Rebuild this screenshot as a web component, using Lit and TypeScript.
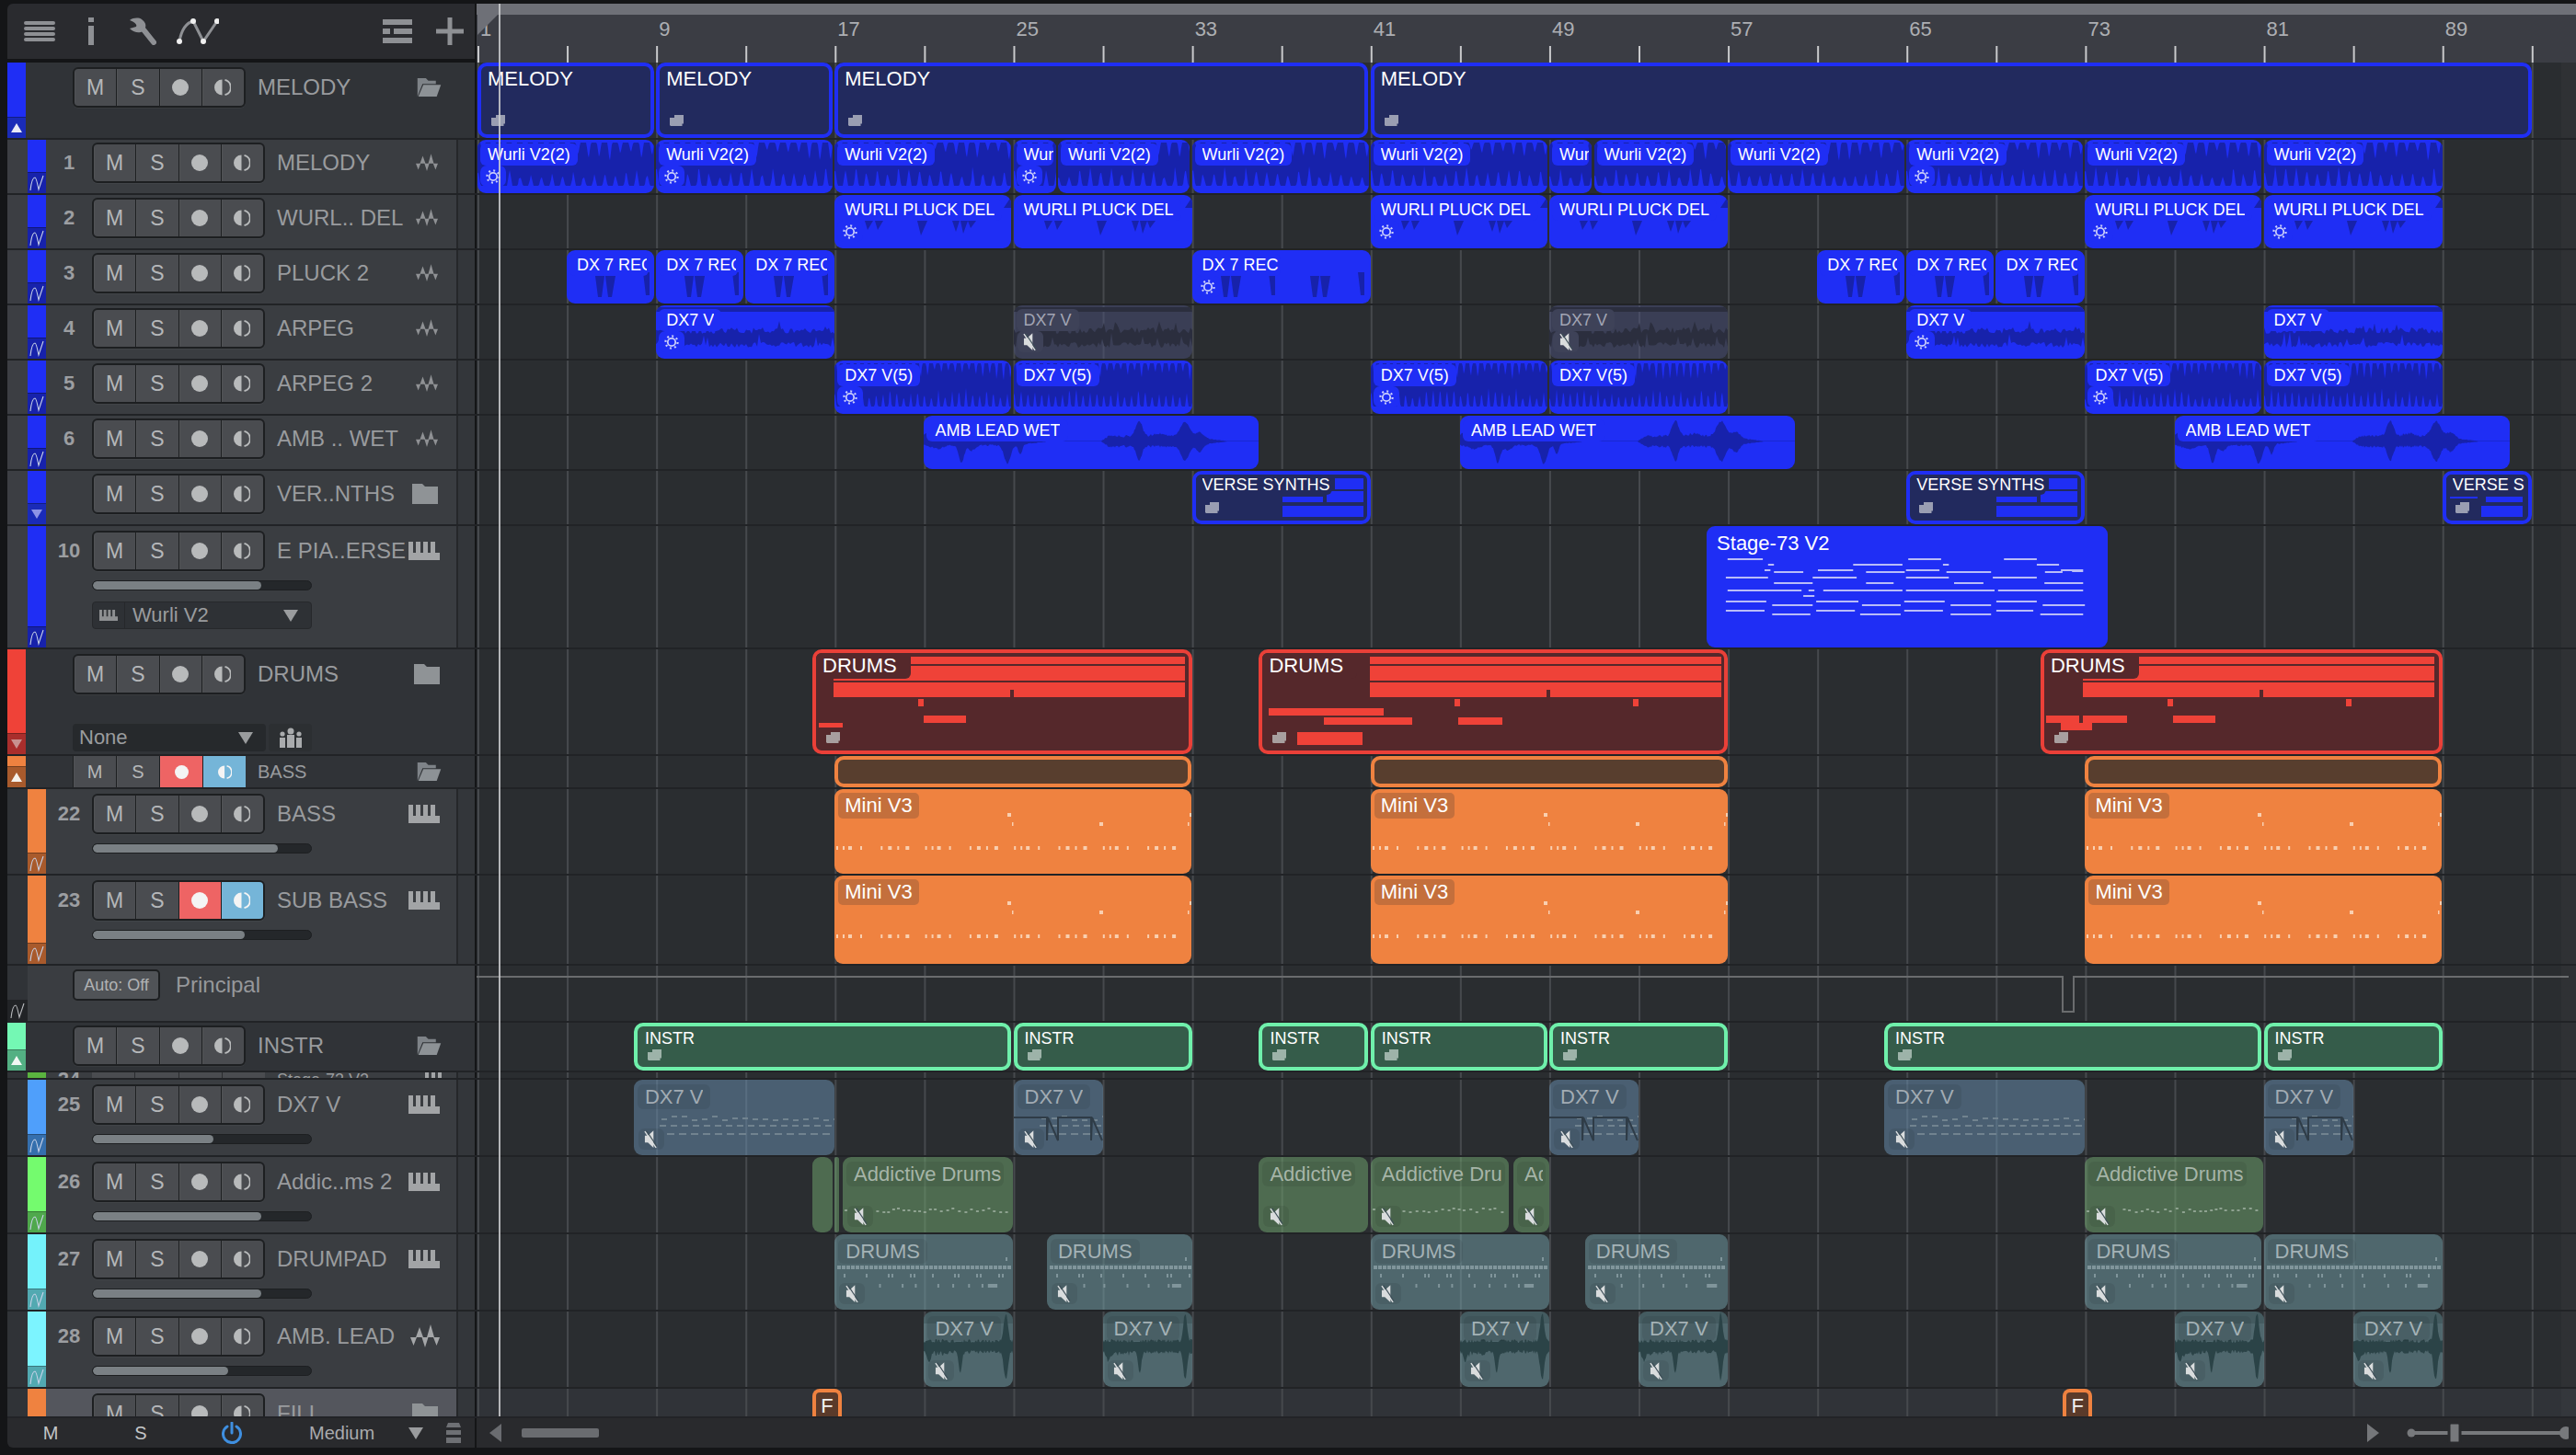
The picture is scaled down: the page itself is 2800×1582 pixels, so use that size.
import { LitElement, html, css, svg, nothing } from 'lit';
import { customElement } from 'lit/decorators.js';

const BAR = 24.27;
const px = (b: number) => (b - 1) * BAR + 1;
const barsEight = [1, 9, 17, 25, 33, 41, 49, 57, 65, 73, 81, 89];

function rng(seed: number) {
  let a = seed * 7919 + 13;
  return () => {
    a |= 0; a = (a + 0x6d2b79f5) | 0;
    let t = Math.imul(a ^ (a >>> 15), 1 | a);
    t = (t + Math.imul(t ^ (t >>> 7), 61 | t)) ^ t;
    return ((t ^ (t >>> 14)) >>> 0) / 4294967296;
  };
}
const envPath = (top: number[], bot: number[], step: number) => {
  let d = `M0 ${top[0].toFixed(1)}`;
  top.forEach((y, i) => (d += `L${(i * step).toFixed(1)} ${y.toFixed(1)}`));
  for (let i = bot.length - 1; i >= 0; i--) d += `L${(i * step).toFixed(1)} ${bot[i].toFixed(1)}`;
  return d + 'Z';
};
const rects = (r: number[][]) => r.map(([x, y, w, h]) => `M${x.toFixed(1)} ${y}h${w.toFixed(1)}v${h}h${(-w).toFixed(1)}z`).join('');

function spikes(w: number, h: number, seed: number, period: number) {
  const r = rng(seed);
  const n = Math.ceil(w / period);
  const tops: number[] = [], bots: number[] = [];
  for (let i = 0; i <= n; i++) { tops.push(8 + r() * 14); bots.push(10 + r() * 12); }
  const t: number[] = [], b: number[] = [];
  for (let x = 0; x <= w; x += 1) {
    const i = Math.floor(x / period), f = x / period - i;
    const tri = Math.max(0, 1 - Math.abs(f - 0.5) * 4.5);
    const tri2 = Math.max(0, 1 - Math.abs(((f + 0.45) % 1) - 0.5) * 4);
    t.push(3 + tops[i] * tri);
    b.push(h - 8 - bots[i] * tri2);
  }
  return envPath(t, b, 1);
}
function tris(list: number[][]) {
  return list.map(([x, y, a, b, c]) => `M${x} ${y}L${x + a} ${y}L${x + b} ${y + c}Z`).join('');
}
function pluck(w: number) {
  let d = '';
  for (let o = 0; o < w; o += 194) {
    d += tris([[o + 33, 28, 9, 3, 10], [o + 44, 28, 9, 3, 10], [o + 90, 28, 11, 4, 16], [o + 128, 28, 8, 4, 12], [o + 137, 28, 8, 3, 14], [o + 145, 28, 9, 3, 8]]);
  }
  return d + `M${w} 14L${w - 8} 14L${w} 2Z`;
}
function rec(w: number) {
  let d = '';
  for (let o = 0; o < w; o += 97) {
    d += `M${o + 31} 28h10l-3 23h-4zM${o + 42} 28h11l-4 23h-4zM${o + 83} 24h7v25h-4z`;
  }
  return d;
}
function dx7(w: number, h: number, seed: number) {
  const r = rng(seed);
  const t: number[] = [], b: number[] = [];
  for (let x = 0; x <= w; x += 2) {
    const sp = r() > 0.9 ? 10 * r() : 0;
    t.push(24 + r() * 7 - sp);
    b.push(h - 12 - r() * 6 - (r() > 0.88 ? 14 * r() : 0));
  }
  return envPath(t, b, 2) + `M0 2h${w}v5H0z`;
}
const gs = (x: number, c0: number, s: number) => Math.exp(-Math.pow((x - c0) / s, 2));
function amb(w: number, seed: number) {
  const r = rng(seed);
  const t: number[] = [], b: number[] = [];
  const mid = 27.5;
  for (let x = 0; x <= w; x += 1) {
    let up = 0, dn = 0;
    if (x <= 132) {
      const base = (3 + r() * 2) * Math.min(1, (135 - x) / 40);
      dn = base + gs(x, 41, 4) * 19 + gs(x, 52, 5) * 6 + gs(x, 91, 5) * 20 + gs(x, 105, 3) * 11 + gs(x, 15, 8) * 4;
      up = base * 0.6 + gs(x, 3, 6) * 6;
    } else if (x >= 193 && x <= 330) {
      const ramp = Math.min(1, (x - 193) / 8) * Math.min(1, (330 - x) / 45);
      const base = (4 + r() * 2.5) * ramp;
      up = base + gs(x, 234, 5) * 17 + gs(x, 284, 7) * 16 + gs(x, 300, 6) * 6 + gs(x, 255, 8) * 3;
      dn = base + gs(x, 234, 4) * 16 + gs(x, 284, 6) * 16 + gs(x, 300, 5) * 8;
    }
    t.push(mid - up);
    b.push(mid + dn + 0.6);
  }
  return envPath(t, b, 1);
}
function waveTeal(w: number, h: number, seed: number) {
  const r = rng(seed);
  const t: number[] = [], b: number[] = [];
  const mid = 38;
  for (let x = 0; x <= w; x += 1) {
    const f = x / w;
    let a = 4 + r() * 4;
    if (f > 0.36 && f < 0.42) a = 5;
    const s = gs(f, 0.41, 0.025) * 24 + gs(f, 0.06, 0.03) * 10;
    const e = gs(f, 0.92, 0.03);
    t.push(mid - a - e * 30);
    b.push(mid + a + s + e * 30 + (f > 0.1 && f < 0.3 ? r() * 3 : 0));
  }
  return envPath(t, b, 1);
}
const STAGE: number[][] = [[122,182,253],[191,201,270],[336,420,270],[430,486,253],[489,499,270],[593,649,253],[649,687,270],[185,195,287],[201,251,293],[276,336,287],[358,424,293],[426,483,287],[495,571,293],[663,693,293],[690,728,287],[709,728,290],[119,191,311],[267,342,311],[426,499,311],[574,649,311],[201,267,328],[358,405,328],[508,558,328],[662,728,328],[122,248,351],[260,270,351],[285,420,351],[426,577,351],[583,728,351],[251,270,369],[119,188,385],[273,345,385],[423,492,385],[580,649,385],[198,267,398],[351,417,398],[502,571,398],[659,731,398],[119,185,415],[273,339,415],[423,489,415],[580,643,415],[198,263,427],[348,417,427],[502,571,427],[655,728,427]];
const stageD = () => rects(STAGE.map(([a, b, y]) => [a / 1.568 - 55, Math.round(y / 2.9 - 52), (b - a) / 1.568, 2]));
function miniD(o: number) {
  const r: number[][] = [[188, 26 + o, 4, 4], [386, 26 + o, 2, 4], [193, 36 + o, 1.5, 4], [288, 36 + o, 4, 4], [384, 36 + o, 1.5, 4]];
  for (let g = 0; g < 8; g++) {
    const off = g * 48.3 + 2;
    const p = g % 2 ? [[0, 2], [8, 4], [18, 2], [27, 4]] : [[0, 2], [7, 2], [13, 4], [26, 2]];
    p.forEach(([x, w]) => r.push([off + x, 62 + o, w, 4]));
  }
  return rects(r);
}
function drumsD(off: number, v: number) {
  const W = 382;
  const r: number[][] = [[off, 8, W, 8], [off, 18, W, 16], [off, 36, W, 16]];
  const low = v === 0
    ? [[92, 54, 6, 8], [98, 72, 46, 8], [-16, 80, 26, 5]]
    : v === 1
    ? [[92, 54, 6, 8], [286, 54, 6, 8], [-110, 64, 125, 8], [-50, 74, 96, 8], [96, 74, 48, 8], [-79, 90, 71, 14]]
    : [[92, 54, 6, 8], [286, 54, 6, 8], [-40, 72, 36, 8], [0, 72, 48, 8], [98, 72, 46, 8], [-24, 80, 34, 8]];
  low.forEach(([x, y, w, h]) => r.push([off + x, y, w, h]));
  return { base: rects(r), notch: rects([[off + 192, 44, 4, 8]]) };
}
function dashD(w: number, kind: string, seed: number) {
  const r = rng(seed);
  const out: number[][] = [];
  if (kind === 'dx25') {
    for (let x = 30; x < w; x += 11) out.push([x, r() > 0.75 ? 39 : 41 + Math.floor(r() * 3), 6, 2]);
    for (let x = 28; x < w; x += 12) out.push([x, 49, 7, 2]);
    for (let x = 36; x < w - 2; x += 13) out.push([x, 58, 8, 2]);
  } else if (kind === 'add') {
    for (let x = 2; x < w - 2; x += 5 + r() * 3) { if (x > 34 || x < 4) out.push([x, 55 + Math.floor(r() * 5), 3, 2]); }
  } else if (kind === 'drm') {
    for (let x = 3; x < w - 3; x += 5) out.push([x, 34, 4, 4]);
    for (let x = 10; x < w - 3; x += 24) { out.push([x, 43, 2, 4]); if (r() > 0.6) out.push([x + 4, 43, 2, 4]); }
    for (let x = w * 0.25; x < w - 15; x += 14 + r() * 12) out.push([x, 54, 2, 4]);
    out.push([w * 0.86, 54, 10, 4]); out.push([w - 8, 25, 2, 4]);
  }
  return rects(out);
}

interface C { s: number; e: number; l?: string; k: string; gear?: boolean; seed?: number; v?: number; }
const c = (s: number, e: number, k: string, l?: string, extra: Partial<C> = {}): C => ({ s, e, k, l, ...extra });
const mk = (list: number[][], k: string, l: string, gears: number[] = []) =>
  list.map(([s, e], i) => c(s, e, k, l, { gear: gears.includes(s), seed: s + i }));

const BLUE = '#1f2ef5', BT = '#1722ab';
interface R {
  t: 'track' | 'folder' | 'small' | 'auto' | 'sliver';
  h: number; pad?: number; col: string; tab?: string; arrow?: string; arrowUp?: boolean;
  num?: string; name?: string; icon?: string; fader?: number; select?: boolean; none?: boolean;
  col0?: string; clips: C[]; fill?: boolean; on?: boolean;
}
const L1 = '#3c3e43', L2 = '#303337';
const ROWS: R[] = [
  { t: 'folder', h: 84, pad: 5, col: BLUE, tab: '#1a2bb8', arrow: '#e8e9f5', arrowUp: true, name: 'MELODY', icon: 'open', clips: [c(1, 9, 'fb', 'MELODY'), c(9, 17, 'fb', 'MELODY'), c(17, 41, 'fb', 'MELODY'), c(41, 93, 'fb', 'MELODY')] },
  { t: 'track', h: 60, pad: 3, col: BLUE, tab: BT, num: '1', name: 'MELODY', icon: 'wave', col0: L1, clips: mk([[1, 9], [9, 17], [17, 25], [25, 27], [27, 33], [33, 41], [41, 49], [49, 51], [51, 57], [57, 65], [65, 73], [73, 81], [81, 89]], 'wurli', 'Wurli V2(2)', [1, 9, 25, 65]) },
  { t: 'track', h: 60, pad: 3, col: BLUE, tab: BT, num: '2', name: 'WURL.. DEL', icon: 'wave', col0: L1, clips: mk([[17, 25], [25, 33], [41, 49], [49, 57], [73, 81], [81, 89]], 'pluck', 'WURLI PLUCK DEL', [17, 41, 73, 81]) },
  { t: 'track', h: 60, pad: 3, col: BLUE, tab: BT, num: '3', name: 'PLUCK 2', icon: 'wave', col0: L1, clips: [...mk([[5, 9], [9, 13], [13, 17]], 'rec', 'DX 7 REC'), c(33, 41, 'rec', 'DX 7 REC', { gear: true }), ...mk([[61, 65], [65, 69], [69, 73]], 'rec', 'DX 7 REC')] },
  { t: 'track', h: 60, pad: 3, col: BLUE, tab: BT, num: '4', name: 'ARPEG', icon: 'wave', col0: L1, clips: [c(9, 17, 'dx7', 'DX7 V', { gear: true, seed: 3 }), c(25, 33, 'dx7m', 'DX7 V', { seed: 5 }), c(49, 57, 'dx7m', 'DX7 V', { seed: 5 }), c(65, 73, 'dx7', 'DX7 V', { gear: true, seed: 3 }), c(81, 89, 'dx7', 'DX7 V', { seed: 7 })] },
  { t: 'track', h: 60, pad: 3, col: BLUE, tab: BT, num: '5', name: 'ARPEG 2', icon: 'wave', col0: L1, clips: mk([[17, 25], [25, 33], [41, 49], [49, 57], [73, 81], [81, 89]], 'dx5', 'DX7 V(5)', [17, 41, 73]) },
  { t: 'track', h: 60, pad: 3, col: BLUE, tab: BT, num: '6', name: 'AMB .. WET', icon: 'wave', col0: L1, clips: mk([[21, 36], [45, 60], [77, 92]], 'amb', 'AMB LEAD WET') },
  { t: 'track', h: 60, pad: 3, col: BLUE, tab: '#1a2bb8', arrow: '#8d93e6', name: 'VER..NTHS', icon: 'closed', col0: L1, clips: [c(33, 41, 'verse', 'VERSE SYNTHS'), c(65, 73, 'verse', 'VERSE SYNTHS'), c(89, 93, 'verse2', 'VERSE SYNTHS')] },
  { t: 'track', h: 134, pad: 5, col: BLUE, tab: BT, num: '10', name: 'E PIA..ERSE', icon: 'keys', fader: 183, select: true, col0: L1, clips: [c(56.05, 74, 'stage', 'Stage-73 V2')] },
  { t: 'folder', h: 116, pad: 5, col: '#ef4238', tab: '#a92e2c', arrow: '#c8918f', name: 'DRUMS', icon: 'closed', none: true, clips: [c(16, 33, 'fr', 'DRUMS', { v: 0 }), c(36, 57, 'fr', 'DRUMS', { v: 1 }), c(71, 89, 'fr', 'DRUMS', { v: 2 })] },
  { t: 'small', h: 36, col: '#ef8240', tab: '#a85a2c', arrow: '#f5f0ea', arrowUp: true, name: 'BASS', icon: 'open', clips: [c(17, 33, 'fo'), c(41, 57, 'fo'), c(73, 89, 'fo')] },
  { t: 'track', h: 94, pad: 5, col: '#ef8240', tab: '#a85a2c', num: '22', name: 'BASS', icon: 'keys', fader: 201, col0: L2, clips: mk([[17, 33], [41, 57], [73, 89]], 'mini', 'Mini V3') },
  { t: 'track', h: 98, pad: 5, col: '#ef8240', tab: '#a85a2c', num: '23', name: 'SUB BASS', icon: 'keys', fader: 165, col0: L2, on: true, clips: mk([[17, 33], [41, 57], [73, 89]], 'mini2', 'Mini V3') },
  { t: 'auto', h: 62, col: L2, clips: [] },
  { t: 'folder', h: 54, pad: 3, col: '#74f8b4', tab: '#53b083', arrow: '#f2f8f4', arrowUp: true, name: 'INSTR', icon: 'open', clips: [c(8, 25, 'fg', 'INSTR'), c(25, 33, 'fg', 'INSTR'), c(36, 41, 'fg', 'INSTR'), c(41, 49, 'fg', 'INSTR'), c(49, 57, 'fg', 'INSTR'), c(64, 81, 'fg', 'INSTR'), c(81, 89, 'fg', 'INSTR')] },
  { t: 'sliver', h: 8, col: '#5ab33f', col0: L2, num: '24', name: 'Stage-73 V2', icon: 'keys', clips: [] },
  { t: 'track', h: 84, pad: 5, col: '#4f9ffb', tab: '#356fad', num: '25', name: 'DX7 V', icon: 'keys', fader: 131, col0: L2, clips: [c(8, 17, 'm25', 'DX7 V', { seed: 1 }), c(25, 29, 'm25b', 'DX7 V', { seed: 2 }), c(49, 53, 'm25b', 'DX7 V', { seed: 2 }), c(64, 73, 'm25', 'DX7 V', { seed: 1 }), c(81, 85, 'm25b', 'DX7 V', { seed: 2 })] },
  { t: 'track', h: 84, pad: 5, col: '#74fb6e', tab: '#4fa84c', num: '26', name: 'Addic..ms 2', icon: 'keys', fader: 183, col0: L2, clips: [c(16, 17, 'm26'), c(17, 17.31, 'm26'), c(17.36, 25, 'm26t', 'Addictive Drums', { seed: 1 }), c(36, 41, 'm26', 'Addictive'), c(41, 47.3, 'm26t', 'Addictive Drums', { seed: 2 }), c(47.4, 49, 'm26', 'Addictive Drums'), c(73, 81, 'm26t', 'Addictive Drums', { seed: 3 })] },
  { t: 'track', h: 84, pad: 5, col: '#74f2fb', tab: '#52a9b1', num: '27', name: 'DRUMPAD', icon: 'keys', fader: 183, col0: L2, clips: [c(17, 25, 'm27', 'DRUMS', { seed: 1 }), c(26.5, 33, 'm27', 'DRUMS', { seed: 2 }), c(41, 49, 'm27', 'DRUMS', { seed: 1 }), c(50.6, 57, 'm27', 'DRUMS', { seed: 2 }), c(73, 81, 'm27', 'DRUMS', { seed: 1 }), c(81, 89, 'm27', 'DRUMS', { seed: 3 })] },
  { t: 'track', h: 84, pad: 5, col: '#7cf4ff', tab: '#52a9b1', num: '28', name: 'AMB. LEAD', icon: 'wave2', fader: 147, col0: L2, clips: mk([[21, 25], [29, 33], [45, 49], [53, 57], [77, 81], [85, 89]], 'm28', 'DX7 V') },
  { t: 'track', h: 84, pad: 5, col: '#ef8240', tab: '#a85a2c', name: 'FILL', icon: 'closed', col0: L2, fill: true, clips: [c(16, 17.3, 'mark', 'F'), c(72, 73.3, 'mark', 'F')] },
];

const WAVE = 'M0 14L3.500 23L7 14ZM6 14L10 3L14 14ZM12.500 14L16 25L19.500 14ZM18 14L22 0L26 14ZM25 14L28.500 23L32 14Z';
const ic = {
  wave: html`<svg class="ic-wave" viewBox="0 0 32 26"><path d="${WAVE}" fill="#8f9194"/></svg>`,
  wave2: html`<svg class="ic-wave2" viewBox="0 0 32 26"><path d="${WAVE}" fill="#a4a6a8"/></svg>`,
  keys: html`<svg class="ic-keys" viewBox="0 0 34 20"><path d="M0 0h5v12h3V0h5v12h3V0h5v12h3V0h5v12h5V0v20H0z" fill="#a2a4a6"/></svg>`,
  closed: html`<svg class="ic-folder" viewBox="0 0 28 22"><path d="M0 0h11l3 3h14v19H0z" fill="#8f9396"/></svg>`,
  open: html`<svg class="ic-open" viewBox="0 0 28 22"><path d="M0 0h10l3 3h9v4H6L0 22z" fill="#7e8388"/><path d="M7 8h21l-5 14H1z" fill="#8d9296"/></svg>`,
  mini: html`<svg class="ic-mini" viewBox="0 0 15 12"><path d="M5 0h10v9.500h-1.500V12H1.500C.7 12 0 11.300 0 10.500V3h5z" fill="currentColor"/></svg>`,
  gear: html`<svg class="ic-gear" viewBox="0 0 16 16"><circle cx="8" cy="8" r="4.200" fill="none" stroke="#c9cdfb" stroke-width="1.800"/><circle cx="8" cy="8" r="6.600" fill="none" stroke="#c9cdfb" stroke-width="2.200" stroke-dasharray="2 3.180"/></svg>`,
  mute: html`<svg class="ic-mute" viewBox="0 0 16 22"><path d="M1 7h3.500L11 1v20l-6.500-6H1z" fill="#d9dcdd"/><path d="M1 2l13 19" stroke="#d9dcdd" stroke-width="1.600"/><path d="M3 1.500l12 18" stroke="#3e4f58" stroke-width="1.200"/></svg>`,
  tri: html`<svg class="ic-tri" viewBox="0 0 16 13"><path d="M0 0h16L8 13z" fill="#9a9c9e"/></svg>`,
  auto: (col: string) => html`<svg class="ic-auto" viewBox="0 0 16 18"><path d="M1 17C2 8 4 3 6 3c1 0 2 3 4 13L15 1" fill="none" stroke="${col}" stroke-width="1.100"/></svg>`,
  mon: (col: string, arc: string) => html`<svg class="ic-mon" viewBox="0 0 18 20"><path d="M8.500 1.500a8.500 8.500 0 0 0 0 17z" fill="${col}"/><path d="M11.500 1.800a8.500 8.500 0 0 1 0 16.400" fill="none" stroke="${arc}" stroke-width="1.800"/></svg>`,
};

@customElement('app-root')
export class AppRoot extends LitElement {
  static styles = css`
    :host { display: block; width: 2800px; height: 1582px; background: #141517; overflow: hidden;
      font-family: "Liberation Sans", Arial, sans-serif; }
    .win { margin: 4px 0 0 8px; width: 2792px; height: 1570px; display: flex; flex-direction: column; position: relative;
      border-radius: 6px 0 0 6px; overflow: hidden; }
    .top { display: flex; height: 64px; flex: none; }
    .tools { width: 510px; height: 60px; flex: none; background: #2a2b2f; display: flex; align-items: center; border-right: 2px solid #141517; box-sizing: border-box; }
    .tools svg { flex: none; display: block; }
    .sp { flex: 1; }
    .ruler { flex: 1; background: #3b3d44; display: flex; flex-direction: column; position: relative; }
    .rtop { height: 12px; background: #6e7077; margin-right: 15px; flex: none; }
    .rlabels { height: 34px; display: flex; padding-left: 1px; color: #adafb3; font-size: 22px; flex: none; }
    .rlabels div { width: 194.160px; flex: none; padding-left: 3px; box-sizing: border-box; line-height: 32px; }
    .rticks { height: 18px; flex: none; background: linear-gradient(90deg, #c9cacc 2px, transparent 2px) 1px 0 / 97.080px 100% repeat-x; }
    .rmark { position: absolute; left: 1px; top: 12px; width: 22px; height: 22px; background: #6e7077; clip-path: polygon(0 100%, 100% 0, 0 0); }
    .rrest { position: absolute; right: 0; top: 0; bottom: 0; width: 15px; background: #34363b; }
    .rows { flex: 1; min-height: 0; overflow: hidden; display: flex; flex-direction: column; }
    .row { display: flex; flex: none; overflow: hidden; border-bottom: 2px solid #212326; box-sizing: border-box; }
    .hd { width: 510px; flex: none; display: flex; box-sizing: border-box; border-right: 2px solid #141517; background: #303337; }
    .strip { width: 20px; flex: none; display: flex; flex-direction: column; }
    .strip .c { flex: 1; min-height: 0; }
    .tab { height: 23px; flex: none; display: flex; align-items: center; justify-content: center; border-top: 1px solid rgba(0,0,0,.3); box-sizing: border-box; }
    .arrow { width: 0; height: 0; border-left: 6px solid transparent; border-right: 6px solid transparent; border-top: 10px solid currentColor; }
    .arrow.up { border-top: none; border-bottom: 10px solid currentColor; }
    .col0 { width: 22px; flex: none; }
    .panel { flex: 1; min-width: 0; background: #3a3d41; box-sizing: border-box; display: flex; flex-direction: column; }
    .fp { flex: 1; min-width: 0; display: flex; flex-direction: column; padding-left: 51px; padding-right: 36px; }
    .tp { padding-right: 18px; }
    .tail { width: 18px; flex: none; background: #33363a; border-left: 2px solid #25272a; }
    .line { display: flex; align-items: center; flex: none; }
    .num { width: 50px; flex: none; text-align: center; font-weight: 700; font-size: 22px; color: #9c9ea1; padding-right: 0; }
    .btns { display: flex; flex: none; height: 44px; border: 2px solid #1d1f21; border-radius: 6px; box-sizing: border-box; width: 188px; background: #1d1f21; gap: 1px; overflow: hidden;
      box-shadow: 0 1px 0 rgba(255,255,255,.04); }
    .btns div { flex: 1; background: #4a4c50; display: flex; align-items: center; justify-content: center; color: #b5b7b9; font-size: 23px; box-shadow: inset 1px 0 0 rgba(255,255,255,.04); }
    .btns .rec { background: #ee6464; } .btns .mn { background: #75b5d8; }
    .dot { width: 18px; height: 18px; border-radius: 50%; background: #b8babb; }
    .rec .dot { background: #f4f4f4; }
    .ic-mon { width: 18px; height: 20px; flex: none; }
    .btns.sm { height: 34px; border: none; border-radius: 0; border-left: 1px solid #1d1f21; }
    .btns.sm div { font-size: 20px; }
    .btns.sm .dot { width: 15px; height: 15px; }
    .btns.sm .ic-mon { width: 15px; height: 17px; }
    .name { flex: 1; min-width: 0; margin-left: 13px; font-size: 24px; color: #999b9e; white-space: nowrap; }
    .name.sm { font-size: 20px; }
    .ic-wave { width: 24px; height: 20px; margin-right: 2px; flex: none; }
    .ic-wave2 { width: 32px; height: 26px; flex: none; }
    .ic-keys { width: 34px; height: 20px; flex: none; }
    .ic-folder { width: 28px; height: 22px; flex: none; margin-right: 2px; }
    .ic-open { width: 27px; height: 20px; flex: none; }
    .fader { margin: 10px 0 0 50px; width: 239px; height: 11px; border-radius: 6px; background: #24272a; border: 1.500px solid #1d1f21; box-sizing: border-box; flex: none; overflow: hidden; }
    .fader div { height: 100%; background: #7a8084; border-radius: 5px; }
    .sel { display: flex; align-items: center; margin: 12px 0 0 50px; width: 239px; height: 30px; background: #2e3135; border: 1px solid #26282b; border-radius: 4px; box-sizing: border-box; color: #9a9c9e; font-size: 22px; flex: none; }
    .sel .k { width: 34px; height: 100%; display: flex; align-items: center; justify-content: center; border-right: 1px solid #26282b; flex: none; }
    .sel .k svg { width: 20px; height: 12px; }
    .sel .t { flex: 1; padding-left: 8px; }
    .ic-tri { width: 16px; height: 13px; margin-right: 14px; flex: none; }
    .nrow { display: flex; margin-top: 32px; gap: 3px; flex: none; }
    .none { width: 210px; height: 30px; background: #26292c; border-radius: 4px; display: flex; align-items: center; color: #9a9c9e; font-size: 22px; box-sizing: border-box; padding-left: 7px; }
    .none span { flex: 1; }
    .grp { width: 47px; height: 30px; background: #2c2f32; border-radius: 4px; display: flex; align-items: center; justify-content: center; }
    .grp svg { width: 26px; height: 22px; }
    .autow { flex: 1; display: flex; align-items: flex-start; padding: 4px 0 0 49px; background: #3a3d41; }
    .autobtn { width: 95px; height: 34px; background: #505357; border: 2px solid #1d1f21; border-radius: 5px; box-sizing: border-box; color: #b0b2b4; font-size: 18px; display: flex; align-items: center; justify-content: center; flex: none; }
    .princ { margin-left: 17px; font-size: 24px; color: #96989b; line-height: 34px; }
    .ac0 { width: 22px; flex: none; display: flex; flex-direction: column; justify-content: flex-end; background: #303337; }
    .ac0 div { height: 23px; background: #212326; display: flex; align-items: center; justify-content: center; }
    .ic-auto { width: 16px; height: 18px; }
    .sline { display: flex; align-items: flex-start; height: 6px; overflow: hidden; }
    .sline .num { line-height: 16px; }
    .sline .sb { width: 188px; height: 6px; flex: none; display: flex; gap: 1px; background: #2a2c2f; }
    .sline .sb i { flex: 1; background: #4a4c50; }
    .sline .nm { flex: 1; margin-left: 13px; font-size: 18px; line-height: 16px; color: #999b9e; white-space: nowrap; }
    .sline .ks { width: 20px; height: 6px; background: linear-gradient(90deg, #a2a4a6 4px, transparent 4px) 0 0 / 7px 100%; margin-right: 14px; }
    .lane { flex: 1; min-width: 0; position: relative; background: #2a2d30 linear-gradient(90deg, #46494d 2px, transparent 2px) 1px 0 / 97.080px 100% repeat-x; }
    .lane.fill { background-color: #303338; }
    .lane::after { content: ""; position: absolute; right: 0; top: 0; bottom: 0; width: 16px; background: rgba(255,255,255,.025); }
    .autoline { position: absolute; left: 0; top: 0; }
    .clip { position: absolute; top: 0; bottom: 0; box-sizing: border-box; border-radius: 9px; overflow: hidden; color: #fff; }
    .ink { position: absolute; left: 0; top: 0; display: block; }
    .body { position: relative; height: 100%; box-sizing: border-box; display: flex; flex-direction: column; justify-content: space-between; align-items: flex-start; }
    .chip { display: flex; min-width: 0; max-width: 100%; box-sizing: border-box; white-space: nowrap; }
    .chip span { overflow: hidden; }
    .blue { background: #1f2ef5; padding: 4px 0 7px 3px; font-size: 18px; }
    .blue .chip { background: #1f2ef5; border-radius: 6px; padding: 0 8px 0 8px; height: 24px; line-height: 24px; max-width: calc(100% - 6px); }
    .blue.recc .chip { padding-right: 2px; }
    .blue.tiny .chip { padding-right: 0; max-width: calc(100% - 3px); }
    .gchip { background: #1f2ef5; width: 28px; height: 23px; border-radius: 7px; display: flex; align-items: center; justify-content: center; }
    .ic-gear { width: 16px; height: 16px; }
    .dxm { background: rgba(74,79,122,.5); color: #a2a5b4; padding: 4px 0 7px 3px; font-size: 18px; }
    .dxm .chip { background: #3e4258; border-radius: 6px; padding: 0 8px; height: 24px; line-height: 24px; }
    .dxm .mchip { background: #3e4258; width: 28px; height: 23px; }
    .fold { border: 4px solid; border-radius: 10px; }
    .fold .ink { left: -4px; top: -4px; }
    .fb { border-color: #1f2ef5; background: #222a5e; font-size: 22px; padding: 0; }
    .fb .chip { padding: 0 7px; height: 28px; line-height: 28px; }
    .ic-mini { width: 15px; height: 12px; margin: 0 0 9px 11px; color: #9a9eb2; flex: none; }
    .verse { border-color: #1f2ef5; background: #222a5e; font-size: 18px; }
    .verse .chip { padding: 0 2px 0 7px; height: 22px; line-height: 22px; background: #222a5e; border-radius: 0 0 6px 0; max-width: calc(100% - 2px); }
    .verse .ic-mini { margin: 0 0 8px 10px; }
    .fr { border-color: #ea4038; background: #55282b; font-size: 22px; }
    .fr .chip { background: #55282b; padding: 0 15px 0 7px; height: 28px; line-height: 28px; border-radius: 0 0 6px 0; }
    .fr .ic-mini { color: #a89f9f; margin-bottom: 8px; }
    .fo { border-color: #ef8240; background: #583e2e; }
    .fg { border-color: #6ff0ab; background: #355c4a; font-size: 18px; }
    .fg .chip { padding: 0 8px; height: 24px; line-height: 24px; margin-top: 1px; }
    .fg .ic-mini { color: #9db3a9; margin-bottom: 7px; }
    .orange { background: #ef8240; font-size: 22px; padding: 4px; }
    .orange .chip { background: #c46f3c; border-radius: 5px; padding: 0 7px; height: 28px; line-height: 28px; }
    .stage { background: #1f2ef5; font-size: 22px; padding: 4px 0 0 11px; }
    .stage .chip { height: 30px; line-height: 30px; }
    .amb { background: #1f2ef5; font-size: 18px; padding: 4px 0 0 3px; }
    .amb .chip { padding: 0 9px; height: 24px; line-height: 24px; background: #1f2ef5; border-radius: 6px; }
    .mc { font-size: 22px; padding: 5px 0 6px 4px; }
    .mc .chip { padding: 0 8px; height: 27px; line-height: 27px; border-radius: 6px; background: rgba(0,0,0,.07); max-width: calc(100% - 4px); }
    .m26 .chip { padding-right: 3px; }
    .mchip { width: 28px; height: 23px; border-radius: 6px; background: rgba(0,0,0,.07); display: flex; align-items: center; justify-content: center; margin-left: 1px; }
    .ic-mute { width: 15px; height: 21px; }
    .m25 { background: rgba(106,145,180,.5); color: #a2acb4; }
    .m26 { background: rgba(114,169,112,.5); color: #a6b5a8; }
    .m27, .m28 { background: rgba(116,161,170,.5); color: #a4b2b6; }
    .mark { background: #5a3a2a; border: 4px solid #ef8240; border-bottom: none; border-radius: 8px 8px 0 0; font-size: 22px; color: #f2f2f2; display: flex; justify-content: center; padding-top: 2px; line-height: 26px; }
    .foot { height: 34px; flex: none; background: #292a2d; display: flex; border-top: 2px solid #222327; box-sizing: border-box; }
    .fl { width: 510px; flex: none; display: flex; border-right: 2px solid #141517; box-sizing: border-box; color: #c3c5c7; font-size: 20px; }
    .fl > div { display: flex; align-items: center; justify-content: center; flex: none; }
    .fm { width: 94px; } .fs { width: 102px; } .fp2 { width: 96px; }
    .fl > .fmed { width: 170px; color: #a9abad; gap: 37px; padding-left: 36px; box-sizing: border-box; justify-content: flex-start; }
    .fmed .ic-tri { margin: 0; }
    .flist { width: 46px; }
    .fr2 { flex: 1; display: flex; align-items: center; padding-left: 14px; }
    .scroll { width: 84px; height: 10px; background: #6a6c70; border-radius: 2px; margin-left: 22px; }
    .play { position: absolute; left: 534px; top: 0; bottom: 34px; width: 2px; background: rgba(205,206,208,.85); pointer-events: none; }
    .zoom { width: 176px; height: 22px; margin-right: 8px; }
  `;

  private ink(k: string, w: number, h: number, cl: C) {
    const seed = cl.seed ?? 1;
    const P = (d: string, fill: string) => svg`<path d="${d}" fill="${fill}"></path>`;
    let paths: unknown[] = [];
    switch (k) {
      case 'wurli': paths = [P(spikes(w, h, seed, 11.5), BT)]; break;
      case 'dx5': paths = [P(spikes(w, h, seed + 31, 7.5), BT)]; break;
      case 'pluck': paths = [P(pluck(w), BT)]; break;
      case 'rec': paths = [P(rec(w), BT)]; break;
      case 'dx7': paths = [P(dx7(w, h, seed), BT)]; break;
      case 'dx7m': paths = [P(dx7(w, h, seed), '#2b2e3e')]; break;
      case 'amb': paths = [P(amb(w, seed), BT)]; break;
      case 'stage': paths = [P(stageD(), '#b9bcf8')]; break;
      case 'fr': {
        const s = cl.s;
        const barStart = s === 16 ? 23 : s === 36 ? 121 : 46;
        const { base, notch } = drumsD(barStart, cl.v ?? 0);
        paths = [P(base, '#ef4238'), P(notch, '#55282b')];
        break;
      }
      case 'mini': paths = [P(miniD(0), '#f9cfb0')]; break;
      case 'mini2': paths = [P(miniD(2), '#f9cfb0')]; break;
      case 'verse': paths = [P(rects([[155, 8, 31, 12], [146, 22, 40, 12], [98, 28, 44, 6], [98, 38, 88, 12]]), BLUE)]; break;
      case 'verse2': paths = [P(rects([[8, 28, 30, 2], [47, 28, 40, 6], [42, 38, 45, 12]]), BLUE)]; break;
      case 'm25': paths = [P(dashD(w, 'dx25', seed), '#71838f')]; break;
      case 'm25b': paths = [P(dashD(w, 'dx25', seed + 3), '#71838f'), svg`<path d="M0 41H36V66L37 41L48 66V41H84V66L85 41L96 66" fill="none" stroke="#2f3c47" stroke-width="2"></path>`]; break;
      case 'm26t': paths = [P(dashD(w, 'add', seed), '#8ea290')]; break;
      case 'm27': paths = [P(dashD(w, 'drm', seed), '#80959b')]; break;
      case 'm28': paths = [P(`M0 0h${w}v13H0z`, 'rgba(42,62,66,.3)'), P(waveTeal(w, h, seed), '#2b4347')]; break;
    }
    return html`<svg class="ink" width="${w}" height="${h}" viewBox="0 0 ${w} ${h}">${paths}</svg>`;
  }

  private clip(cl: C, h: number, next: boolean) {
    const left = px(cl.s);
    const w = Math.round((cl.e - cl.s) * BAR - (next ? 2.5 : 0));
    const k = cl.k;
    const st = `left:${left.toFixed(1)}px;width:${w}px`;
    let cls = '';
    let bottom: unknown = nothing;
    const folder = html`${ic.mini}`;
    const chip = cl.l ? html`<div class="chip"><span>${cl.l}</span></div>` : nothing;
    if (['wurli', 'pluck', 'rec', 'dx7', 'dx5'].includes(k)) {
      cls = k === 'rec' ? 'blue recc' : w < 60 ? 'blue tiny' : 'blue';
      if (cl.gear) bottom = html`<div class="gchip">${ic.gear}</div>`;
    }
    else if (k === 'dx7m') { cls = 'dxm'; bottom = html`<div class="mchip">${ic.mute}</div>`; }
    else if (k === 'amb') cls = 'amb';
    else if (k === 'stage') cls = 'stage';
    else if (k === 'fb') { cls = 'fold fb'; bottom = folder; }
    else if (k === 'verse' || k === 'verse2') { cls = 'fold verse'; bottom = folder; }
    else if (k === 'fr') { cls = 'fold fr'; bottom = folder; }
    else if (k === 'fo') cls = 'fold fo';
    else if (k === 'fg') { cls = 'fold fg'; bottom = folder; }
    else if (k === 'mini' || k === 'mini2') cls = 'orange';
    else if (k === 'mark') { return html`<div class="clip mark" style="${st}">${cl.l}</div>`; }
    else if (k.startsWith('m2')) {
      const g = k.slice(0, 3);
      cls = `mc ${g}`;
      if (cl.l) bottom = html`<div class="mchip">${ic.mute}</div>`;
    }
    return html`<div class="clip ${cls}" style="${st}">
      ${this.ink(k, w, h, cl)}
      <div class="body">${chip}${bottom}</div>
    </div>`;
  }

  private btns(on?: boolean, sm?: boolean) {
    return html`<div class="btns ${sm ? 'sm' : ''}">
      <div>M</div><div>S</div>
      <div class="${on ? 'rec' : ''}"><i class="dot"></i></div>
      <div class="${on ? 'mn' : ''}">${on ? ic.mon('#f4f4f4', '#f4f4f4') : ic.mon('#b8babb', '#b8babb')}</div>
    </div>`;
  }
  private icon(n?: string) {
    return n ? (ic as any)[n] : nothing;
  }

  private header(r: R) {
    const strip = html`<div class="strip">
      <div class="c" style="background:${r.col}"></div>
      <div class="tab" style="background:${r.tab};color:${r.arrow ?? '#fff'}">
        ${r.arrow ? html`<i class="arrow ${r.arrowUp ? 'up' : ''}"></i>` : ic.auto('#c8d2e8')}
      </div>
    </div>`;
    if (r.t === 'auto') {
      return html`<div class="hd"><div class="ac0"><div>${ic.auto('#b9bbbe')}</div></div>
        <div class="autow"><div class="autobtn">Auto: Off</div><div class="princ">Principal</div></div></div>`;
    }
    if (r.t === 'sliver') {
      return html`<div class="hd"><div class="col0" style="background:${r.col0}"></div><div class="strip"><div class="c" style="background:${r.col}"></div></div>
        <div class="panel"><div class="sline"><div class="num">${r.num}</div><div class="sb"><i></i><i></i><i></i><i></i></div><div class="nm">${r.name}</div><div class="ks"></div></div></div><div class="tail"></div></div>`;
    }
    if (r.t === 'small') {
      return html`<div class="hd">
        <div class="strip" style="background:${r.col}">
          <div class="c"></div>
          <div class="tab" style="background:${r.tab};color:${r.arrow}"><i class="arrow up"></i></div>
        </div>
        <div class="fp"><div class="line">
          <div class="btns sm"><div>M</div><div>S</div><div class="rec"><i class="dot"></i></div><div class="mn">${ic.mon('#f4f4f4', '#f4f4f4')}</div></div>
          <div class="name sm">${r.name}</div>${this.icon(r.icon)}
        </div></div>
      </div>`;
    }
    if (r.t === 'folder') {
      return html`<div class="hd">${strip}
        <div class="fp" style="padding-top:${r.pad}px">
          <div class="line">${this.btns()}<div class="name">${r.name}</div>${this.icon(r.icon)}</div>
          ${r.none ? html`<div class="nrow"><div class="none"><span>None</span>${ic.tri}</div><div class="grp">
            <svg viewBox="0 0 26 22"><circle cx="13" cy="4" r="3.500" fill="#a9abad"/><path d="M9 8h8v14H9z" fill="#a9abad"/><circle cx="4" cy="7" r="2.600" fill="#a9abad"/><path d="M1 11h6v11H1z" fill="#a9abad"/><circle cx="22" cy="7" r="2.600" fill="#a9abad"/><path d="M19 11h6v11h-6z" fill="#a9abad"/></svg></div></div>` : nothing}
        </div>
      </div>`;
    }
    const lighter = r.fill ? 'background:#54565d' : '';
    return html`<div class="hd">
      <div class="col0" style="background:${r.col0}"></div>
      ${r.fill ? html`<div class="strip"><div class="c" style="background:${r.col}"></div></div>` : strip}
      <div class="panel tp" style="padding-top:${r.pad}px;${lighter}">
        <div class="line"><div class="num">${r.num ?? ''}</div>${this.btns(r.on)}<div class="name">${r.name}</div>${this.icon(r.icon)}</div>
        ${r.fader ? html`<div class="fader"><div style="width:${r.fader}px"></div></div>` : nothing}
        ${r.select ? html`<div class="sel"><div class="k"><svg viewBox="0 0 34 20"><path d="M0 0h5v12h3V0h5v12h3V0h5v12h3V0h5v12h5V0v20H0z" fill="#8e9092"/></svg></div><div class="t">Wurli V2</div>${ic.tri}</div>` : nothing}
      </div>
      <div class="tail"></div>
    </div>`;
  }

  render() {
    return html`<div class="win">
      <div class="top">
        <div class="tools">
          <svg style="margin-left:18px" width="34" height="24" viewBox="0 0 34 24"><path d="M2 1h30a1.500 1.500 0 0 1 0 4H2a1.500 1.500 0 0 1 0-4zM2 7h30a1.500 1.500 0 0 1 0 4H2a1.500 1.500 0 0 1 0-4zM2 13h30a1.500 1.500 0 0 1 0 4H2a1.500 1.500 0 0 1 0-4zM2 19h30a1.500 1.500 0 0 1 0 4H2a1.500 1.500 0 0 1 0-4z" fill="#8e9094"/></svg>
          <svg style="margin-left:35px" width="8" height="30" viewBox="0 0 8 30"><path d="M1 0h6v5H1zM1 9h6v21H1z" fill="#8e9094"/></svg>
          <svg style="margin-left:37px" width="30" height="30" viewBox="0 0 30 30"><path d="M1 3C5 0 11 0 14 2C18 5 19 8 18 11L15 15C12 17 6 17 1 12L8 10C9 8 8 6 1 3Z" fill="#8e9094"/><path d="M15 12L27 27" stroke="#8e9094" stroke-width="6" stroke-linecap="round" fill="none"/></svg>
          <svg style="margin-left:22px" width="46" height="30" viewBox="0 0 46 30"><path d="M3 26C5 15 10 6 18 4M18 4L29 26L44 4" fill="none" stroke="#8e9094" stroke-width="3"/><circle cx="3" cy="26" r="3" fill="#f0f0f0"/><circle cx="18" cy="4" r="3" fill="#f0f0f0"/><circle cx="29" cy="26" r="3" fill="#f0f0f0"/><circle cx="44" cy="4" r="3" fill="#f0f0f0"/></svg>
          <div class="sp"></div>
          <svg width="32" height="26" viewBox="0 0 32 26"><path d="M0 0h32v6H0zM0 10h8v6H0zM12 10h20v6H12zM0 20h32v6H0z" fill="#8e9094"/></svg>
          <svg style="margin:0 12px 0 26px" width="30" height="30" viewBox="0 0 30 30"><path d="M12.500 0h5v12.500H30v5H17.500V30h-5V17.500H0v-5h12.500z" fill="#8e9094"/></svg>
        </div>
        <div class="ruler">
          <div class="rtop"></div>
          <div class="rlabels">${barsEight.map((b) => html`<div>${b}</div>`)}</div>
          <div class="rticks"></div>
          <div class="rmark"></div>
          <div class="rrest"></div>
        </div>
      </div>
      <div class="rows">
        ${ROWS.map((r) => html`<div class="row" style="height:${r.h}px">
          ${this.header(r)}
          <div class="lane ${r.fill ? 'fill' : ''}">
            ${r.t === 'auto' ? html`<svg class="autoline" width="2274" height="60" viewBox="0 0 2274 60"><path d="M0 12H1724V50H1736V12H2274" fill="none" stroke="#6a6c6e" stroke-width="2"/></svg>` : nothing}
            ${r.clips.map((cl) => this.clip(cl, r.h - 2, r.clips.some((o) => Math.abs(o.s - cl.e) < 0.2)))}
          </div>
        </div>`)}
      </div>
      <div class="foot">
        <div class="fl">
          <div class="fm">M</div><div class="fs">S</div>
          <div class="fp2"><svg width="22" height="24" viewBox="0 0 22 24"><path d="M6 5a9.500 9.500 0 1 0 10 0M11 1v11" fill="none" stroke="#3f8fe0" stroke-width="3" stroke-linecap="round"/></svg></div>
          <div class="fmed"><span>Medium</span>${ic.tri}</div>
          <div class="flist"><svg width="16" height="22" viewBox="0 0 16 22"><path d="M2 0h12l2 5H0zM0 8h16v5H0zM0 16h16v6H0z" fill="#6e7074"/></svg></div>
        </div>
        <div class="fr2">
          <svg width="13" height="20" viewBox="0 0 13 20"><path d="M13 0v20L0 10z" fill="#6a6c70"/></svg>
          <div class="scroll"></div>
          <div class="sp"></div>
          <svg width="13" height="20" viewBox="0 0 13 20" style="margin-right:30px"><path d="M0 0v20l13-10z" fill="#75777a"/></svg>
          <svg class="zoom" viewBox="0 0 176 22"><path d="M3 9h170v4H3z" fill="#77797c"/><circle cx="5" cy="11" r="4.500" fill="#77797c"/><circle cx="173" cy="11" r="7" fill="#77797c"/><rect x="46" y="0" width="12" height="22" rx="2" stroke="#292a2d" stroke-width="3" fill="#77797c"/></svg>
        </div>
      </div>
      <div class="play"></div>
    </div>`;
  }
}
